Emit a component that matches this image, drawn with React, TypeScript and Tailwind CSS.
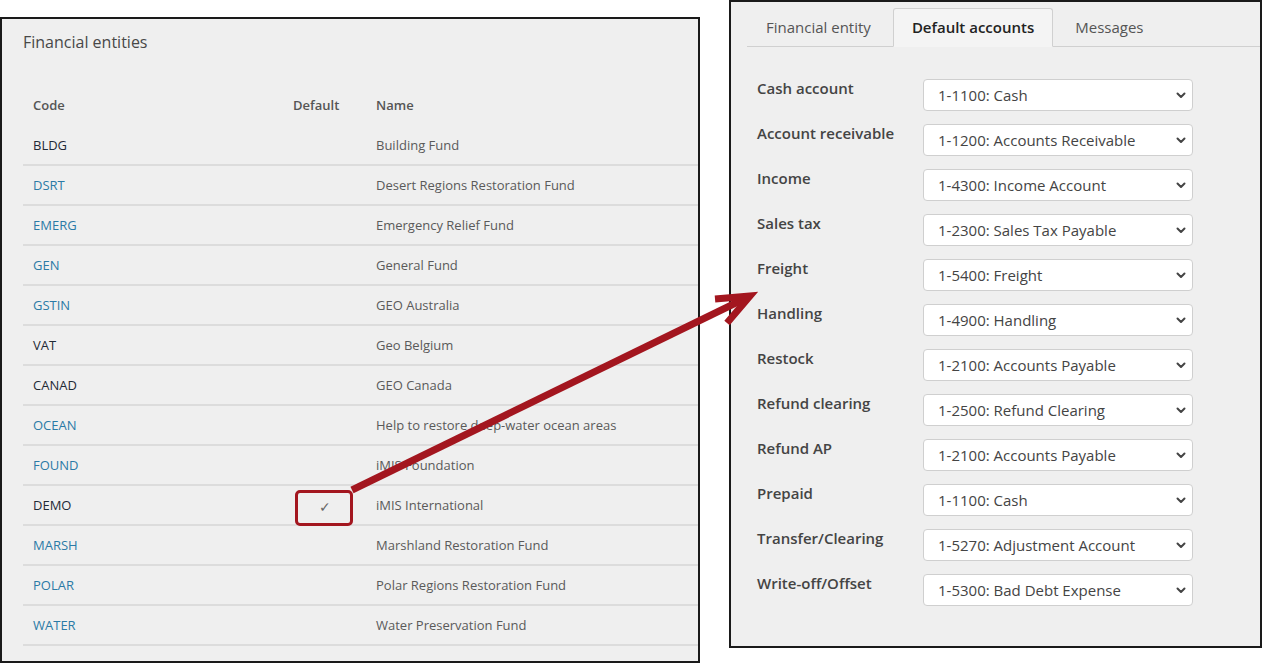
import React from "react";

const BLUE = "text-[#2b7aa6]";
const DARK = "text-[#1f2a36]";

const rows: { code: string; name: string; blue: boolean; def?: boolean }[] = [
  { code: "BLDG", name: "Building Fund", blue: false },
  { code: "DSRT", name: "Desert Regions Restoration Fund", blue: true },
  { code: "EMERG", name: "Emergency Relief Fund", blue: true },
  { code: "GEN", name: "General Fund", blue: true },
  { code: "GSTIN", name: "GEO Australia", blue: true },
  { code: "VAT", name: "Geo Belgium", blue: false },
  { code: "CANAD", name: "GEO Canada", blue: false },
  { code: "OCEAN", name: "Help to restore deep-water ocean areas", blue: true },
  { code: "FOUND", name: "iMIS Foundation", blue: true },
  { code: "DEMO", name: "iMIS International", blue: false, def: true },
  { code: "MARSH", name: "Marshland Restoration Fund", blue: true },
  { code: "POLAR", name: "Polar Regions Restoration Fund", blue: true },
  { code: "WATER", name: "Water Preservation Fund", blue: true },
];

const accounts: [string, string][] = [
  ["Cash account", "1-1100: Cash"],
  ["Account receivable", "1-1200: Accounts Receivable"],
  ["Income", "1-4300: Income Account"],
  ["Sales tax", "1-2300: Sales Tax Payable"],
  ["Freight", "1-5400: Freight"],
  ["Handling", "1-4900: Handling"],
  ["Restock", "1-2100: Accounts Payable"],
  ["Refund clearing", "1-2500: Refund Clearing"],
  ["Refund AP", "1-2100: Accounts Payable"],
  ["Prepaid", "1-1100: Cash"],
  ["Transfer/Clearing", "1-5270: Adjustment Account"],
  ["Write-off/Offset", "1-5300: Bad Debt Expense"],
];

function Chevron() {
  return (
    <svg width="10" height="7" viewBox="0 0 10 7" className="shrink-0">
      <path d="M1.5 1.5 L5 5 L8.5 1.5" fill="none" stroke="#444" strokeWidth="2" strokeLinecap="round" strokeLinejoin="round" />
    </svg>
  );
}

export default function App() {
  return (
    <div
      className="relative w-[1262px] h-[663px] bg-white flex items-start gap-[29px] overflow-hidden"
      style={{ fontFamily: '"Open Sans", "Noto Sans", sans-serif' }}
    >
      {/* Left panel */}
      <div className="mt-[17px] w-[700px] h-[646px] border-2 border-[#1a1a1a] bg-[#efefef] shrink-0">
        <div className="pl-[21px] pt-[12px] text-[16px] leading-[22px] text-[#484848]">Financial entities</div>
        <div className="ml-[21px] mt-[33px] text-[13px]">
          <div className="flex h-[40px] items-center font-semibold text-[#555]">
            <div className="w-[260px] pl-[10px]">Code</div>
            <div className="w-[83px] pl-[10px]">Default</div>
            <div className="pl-[10px]">Name</div>
          </div>
          {rows.map((r) => (
            <div key={r.code} className="flex h-[40px] pt-[2px] items-center border-b-2 border-[#dcdcdc]">
              <div className={`w-[260px] pl-[10px] ${r.blue ? BLUE : DARK}`}>{r.code}</div>
              <div className="w-[83px] flex justify-center text-[#666] text-[14px]">{r.def ? "✓" : ""}</div>
              <div className="pl-[10px] text-[#5a5a5a]">{r.name}</div>
            </div>
          ))}
        </div>
      </div>

      {/* Right panel */}
      <div className="w-[533px] h-[648px] border-2 border-[#1a1a1a] bg-[#efefef] shrink-0">
        <div className="ml-[16px] mt-[6px] flex items-start border-b border-[#d0d0d0] text-[15px]">
          <div className="pl-[19px] pr-[22px] h-[38px] flex items-center text-[#555]">Financial entity</div>
          <div className="px-[18px] h-[39px] -mb-[1px] flex items-center font-semibold text-[#222] bg-[#f4f4f4] border border-[#d0d0d0] border-b-[#f4f4f4] rounded-t-[3px]">
            Default accounts
          </div>
          <div className="pl-[22px] pr-[19px] h-[38px] flex items-center text-[#555]">Messages</div>
        </div>
        <div className="pl-[26px] pt-[32px] flex flex-col gap-[13px]">
          {accounts.map(([label, value], i) => (
            <div key={i} className="flex items-start">
              <div className="w-[166px] text-[15px] leading-[18px] font-semibold text-[#444]">{label}</div>
              <div className="w-[270px] h-[32px] bg-white border border-[#cfcfcf] rounded-[4px] flex items-center justify-between pl-[14px] pr-[6px] text-[15px] text-[#444]">
                <span>{value}</span>
                <Chevron />
              </div>
            </div>
          ))}
        </div>
      </div>

      {/* Highlight box around default check */}
      <div className="absolute left-[295px] top-[490px] w-[58px] h-[36px] border-[3px] border-[#a3161f] rounded-[5px]" />

      {/* Arrow */}
      <svg className="absolute left-0 top-0 pointer-events-none" width="1262" height="663">
        <line x1="352" y1="490" x2="746" y2="298" stroke="#a3161f" strokeWidth="7" />
        <polyline points="715,299 750,296 727,323" fill="none" stroke="#a3161f" strokeWidth="7" strokeLinejoin="miter" />
      </svg>
    </div>
  );
}
